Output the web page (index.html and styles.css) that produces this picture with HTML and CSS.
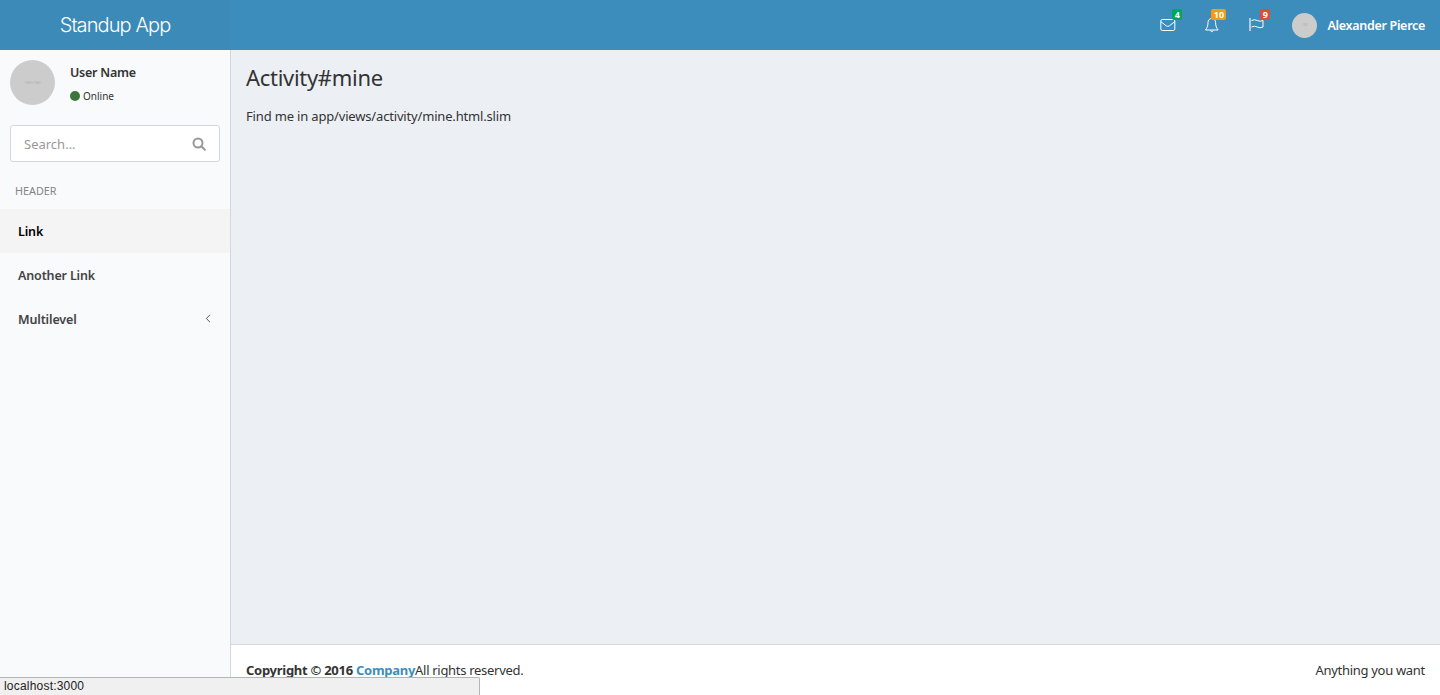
FILE: index.html
```html
<!DOCTYPE html>
<html lang="en">
<head>
<meta charset="utf-8">
<title>Standup App</title>
<link rel="stylesheet" href="styles.css">
</head>
<body>
<header class="topbar">
  <a class="logo">Standup App</a>
  <div class="topbar-fill">
    <nav class="top-menu">
      <a class="top-icon top-icon-mail">
        <svg width="16" height="12" viewBox="0 0 16 12" fill="none" stroke="#fff" stroke-width="1"><rect x=".8" y=".5" width="14" height="11" rx="1.500"/><path d="M1 2.800l5.200 4q1.600 1.200 3.200 0l5.200-4"/></svg>
        <span class="badge badge-green">4</span>
      </a>
      <a class="top-icon top-icon-bell">
        <svg width="15" height="16" viewBox="0 0 15 16" fill="none" stroke="#fff" stroke-width="1"><path d="M6.800 1.500c-2.500 0-3.800 1.800-3.800 4 0 3.500-1 5.500-2.500 7.500h12.600c-1.500-2-2.500-4-2.500-7.500 0-2.200-1.300-4-3.800-4z"/><path d="M5.300 13.500q1.500 2.500 3 0"/></svg>
        <span class="badge badge-orange">10</span>
      </a>
      <a class="top-icon top-icon-flag">
        <svg width="15" height="14" viewBox="0 0 15 14" fill="none" stroke="#fff" stroke-width="1"><path d="M1 0v13" stroke-width="1.600" stroke-opacity=".7"/><path d="M2.500 2.500q3-1.500 5.800 0t5.700 0v6.500q-3 1.500-5.700 0t-5.800 0"/></svg>
        <span class="badge badge-red">9</span>
      </a>
      <a class="top-user">
        <span class="top-avatar"><span class="avatar-mark-sm">160</span></span>
        <span class="top-user-name">Alexander Pierce</span>
      </a>
    </nav>
  </div>
</header>
<div class="body-row">
  <aside class="sidebar">
    <div class="user-panel">
      <div class="user-avatar"><span class="avatar-mark">160×160</span></div>
      <div class="user-info">
        <p class="user-name">User Name</p>
        <p class="user-status"><span class="status-dot"></span>Online</p>
      </div>
    </div>
    <form class="search">
      <span class="search-text">Search...</span>
      <svg class="search-icon" width="14" height="14" viewBox="0 0 14 14" fill="none" stroke="#999" stroke-width="2"><circle cx="6" cy="6" r="4.500"/><path d="M9.300 9.300l3.500 3.500" stroke-linecap="round"/></svg>
    </form>
    <p class="menu-header">HEADER</p>
    <ul class="menu">
      <li class="menu-item menu-item-active">Link</li>
      <li class="menu-item">Another Link</li>
      <li class="menu-item menu-item-tree">Multilevel
        <svg class="menu-chevron" width="6" height="9" viewBox="0 0 6 9" fill="none" stroke="#555" stroke-width="1"><path d="M5 .8L1.300 4.500 5 8.200"/></svg>
      </li>
    </ul>
  </aside>
  <div class="main">
    <main class="content">
      <h1 class="page-title">Activity#mine</h1>
      <p class="page-text">Find me in app/views/activity/mine.html.slim</p>
    </main>
    <footer class="footer">
      <p class="footer-left"><strong class="footer-strong">Copyright © 2016 <a class="footer-link">Company</a></strong>All rights reserved.</p>
      <p class="footer-right">Anything you want</p>
    </footer>
  </div>
</div>
<div class="status-bubble">localhost:3000</div>
</body>
</html>
```

FILE: styles.css
```css
* { box-sizing: border-box; }
html, body { height: 100%; }
body {
  margin: 0;
  height: 695px;
  overflow: hidden;
  display: flex;
  flex-direction: column;
  font-family: "Noto Sans", "Open Sans", sans-serif;
  font-size: 13px;
  color: #333;
  background: #ecf0f5;
}
p, h1, ul { margin: 0; padding: 0; }

.topbar { display: flex; height: 50px; flex: none; color: #fff; }
.logo {
  width: 230px;
  background: #3b8ab8;
  text-align: center;
  font-family: Inter, "Liberation Sans", sans-serif;
  font-weight: 300;
  font-size: 20px;
  letter-spacing: -.9px;
  line-height: 50px;
}
.topbar-fill { flex: 1; background: #3c8dbc; display: flex; justify-content: flex-end; }
.top-menu { display: flex; align-items: center; padding-right: 15px; }
.top-icon { position: relative; display: flex; }
.top-icon-mail { margin-right: 29px; }
.top-icon-bell { margin-right: 29px; }
.top-icon-flag { margin-right: 28px; }
.badge {
  position: absolute;
  font-size: 9px;
  font-weight: 700;
  line-height: 11px;
  height: 11px;
  padding: 0;
  border-radius: 2px;
  color: #fff;
  text-align: center;
}
.badge-green { background: #00a65a; top: -10px; left: 12px; width: 10px; }
.badge-orange { background: #f39c12; top: -8px; left: 6px; width: 15px; }
.badge-red { background: #dd4b39; top: -9px; left: 11px; width: 10px; }
.top-user { display: flex; align-items: center; gap: 10px; }
.top-avatar {
  width: 25px; height: 25px; border-radius: 50%;
  background: #ccc;
  display: flex; align-items: center; justify-content: center;
}
.avatar-mark-sm { font-size: 3px; color: #aaa; }
.top-user-name { font-size: 12.500px; font-weight: 600; letter-spacing: -.3px; }

.body-row { flex: 1; display: flex; min-height: 0; }
.sidebar {
  width: 231px;
  flex: none;
  background: #f9fafc;
  border-right: 1px solid #d2d6de;
}
.user-panel { display: flex; padding: 10px; gap: 15px; height: 65px; }
.user-avatar {
  width: 45px; height: 45px; border-radius: 50%;
  background: #ccc;
  display: flex; align-items: center; justify-content: center;
}
.avatar-mark { font-size: 4px; color: #aaa; }
.user-name { font-size: 12.500px; font-weight: 600; line-height: 18px; margin-top: 4px; letter-spacing: -.25px; }
.user-status { display: flex; align-items: center; font-size: 10px; line-height: 14px; margin-top: 7px; }
.status-dot { width: 10px; height: 10px; border-radius: 50%; background: #3c763d; margin-right: 3px; }
.search {
  display: flex;
  align-items: center;
  justify-content: space-between;
  width: 210px;
  height: 37px;
  margin: 10px 0 0 10px;
  padding: 0 13px;
  background: #fff;
  border: 1px solid #d2d6de;
  border-radius: 3px;
}
.search-text { font-size: 13px; color: #999; }
.menu-header { font-size: 10.800px; line-height: 15px; color: #848484; padding: 21px 0 11px 15px; }
.menu { list-style: none; }
.menu-item {
  display: flex;
  align-items: center;
  justify-content: space-between;
  height: 44px;
  padding: 0 19px 0 18px;
  font-weight: 600;
  font-size: 12.500px;
  letter-spacing: -.15px;
  color: #444;
}
.menu-item-active { background: #f4f4f5; color: #000; }
.menu-chevron { margin-bottom: 2px; }

.main { flex: 1; display: flex; flex-direction: column; min-width: 0; }
.content { flex: 1; padding: 15px; }
.page-title { font-size: 22px; font-weight: 400; line-height: 25px; color: #333; letter-spacing: -.3px; }
.page-text { font-size: 13px; line-height: 18px; margin-top: 17px; letter-spacing: -.17px; }
.footer {
  height: 51px;
  flex: none;
  display: flex;
  justify-content: space-between;
  padding: 16px 15px 0;
  background: #fff;
  border-top: 1px solid #d2d6de;
  font-size: 13px;
  line-height: 18px;
  letter-spacing: -.3px;
}
.footer-strong { letter-spacing: -.27px; }
.footer-link { color: #3c8dbc; }

.status-bubble {
  position: absolute;
  left: 0;
  bottom: 0;
  width: 480px;
  height: 18px;
  padding-left: 4px;
  background: #f0f0f0;
  border: 1px solid #b5b5b5;
  border-bottom: 0;
  border-left: 0;
  border-top-right-radius: 2px;
  font-family: "Liberation Sans", sans-serif;
  font-size: 12px;
  letter-spacing: .2px;
  line-height: 17px;
  color: #222;
}
```
